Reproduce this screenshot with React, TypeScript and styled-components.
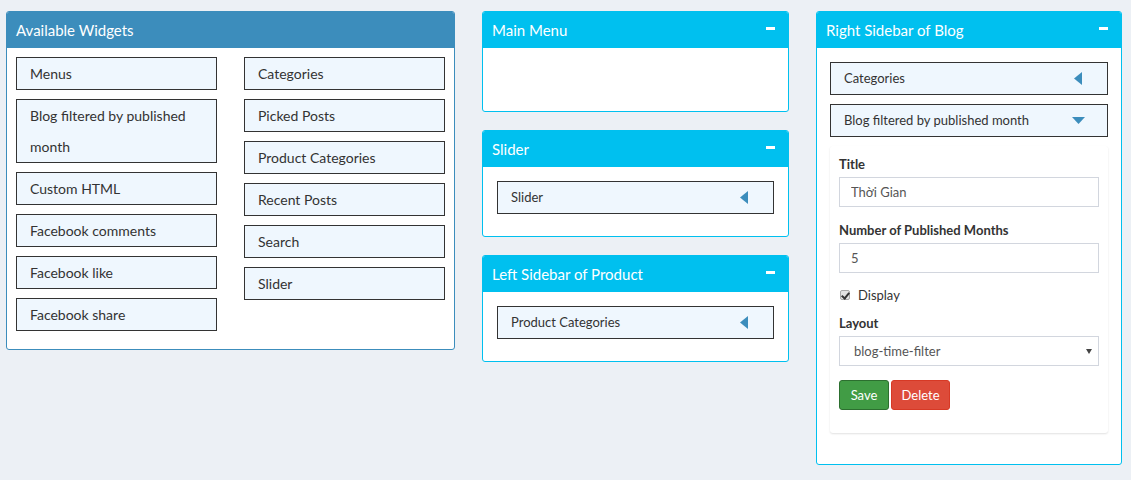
import React from "react";
import styled, { createGlobalStyle } from "styled-components";

const Global = createGlobalStyle`
  html, body { margin: 0; padding: 0; }
  body {
    background: #ecf0f5;
    font-family: Lato, "Noto Sans", "Liberation Sans", sans-serif;
    color: #333;
  }
`;

const Page = styled.div`
  display: grid;
  grid-template-columns: 449px 307px 306px;
  column-gap: 27px;
  padding: 11px 6px;
  align-items: start;
`;

const Column = styled.div`
  display: flex;
  flex-direction: column;
  gap: 18px;
`;

const Panel = styled.section<{ $color: string }>`
  border: 1px solid ${(p) => p.$color};
  border-radius: 3px;
  background: #fff;
  overflow: hidden;
`;

const Header = styled.header<{ $color: string }>`
  height: 36px;
  background: ${(p) => p.$color};
  display: flex;
  align-items: center;
  justify-content: space-between;
  padding: 0 13px 0 9px;
`;

const Title = styled.h3`
  margin: 0 0 1px;
  font-size: 15px;
  font-weight: 400;
  color: #fff;
`;

const Minus = styled.span`
  width: 9px;
  height: 3px;
  background: #fff;
  margin-top: -4px;
`;

const Body = styled.div<{ $pad: string; $minH?: number }>`
  padding: ${(p) => p.$pad};
  min-height: ${(p) => (p.$minH ? `${p.$minH}px` : "0")};
  display: flex;
  flex-direction: column;
  gap: 9px;
`;

const TwoCols = styled.div`
  display: grid;
  grid-template-columns: 1fr 1fr;
  column-gap: 27px;
  padding: 9px 9px 18px;
  align-items: start;
`;

const Stack = styled.div`
  display: flex;
  flex-direction: column;
  gap: 9px;
`;

const Item = styled.div<{ $size: number }>`
  border: 1px solid #333;
  background: #eff7fe;
  min-height: 31px;
  line-height: 31px;
  font-size: ${(p) => p.$size}px;
  padding: 0 11px 0 13px;
  color: #333;
  display: flex;
  align-items: flex-start;
  justify-content: space-between;
`;

const ItemText = styled.span<{ $maxW?: number }>`
  max-width: ${(p) => (p.$maxW ? `${p.$maxW}px` : "none")};
`;

const CaretBox = styled.span`
  width: 14px;
  height: 31px;
  margin-right: 11px;
  display: flex;
  align-items: center;
  justify-content: center;
`;

const FormBox = styled.div`
  background: #fff;
  border-radius: 3px;
  box-shadow: 0 1px 2px rgba(0, 0, 0, 0.12);
  padding: 9px 9px 23px;
  display: flex;
  flex-direction: column;
`;

const Label = styled.label<{ $mt?: number }>`
  display: block;
  font-weight: 700;
  font-size: 13px;
  line-height: 18px;
  color: #333;
  margin-top: ${(p) => p.$mt ?? 0}px;
  margin-bottom: 4px;
`;

const Input = styled.input`
  box-sizing: border-box;
  height: 30px;
  width: 100%;
  border: 1px solid #d2d6de;
  padding: 0 11px;
  font-family: inherit;
  font-size: 13px;
  color: #555;
  outline: none;
`;

const CheckRow = styled.label`
  display: flex;
  align-items: center;
  height: 20px;
  margin-top: 12px;
  font-size: 13px;
  color: #333;
  gap: 8px;
`;

const Check = styled.input`
  appearance: none;
  margin: 0 0 0 1px;
  width: 10px;
  height: 10px;
  border: 1px solid #a9a9a9;
  border-radius: 2px;
  background: #e3e3e3;
  position: relative;
  &::after {
    content: "";
    position: absolute;
    left: 2px;
    top: 0px;
    width: 3px;
    height: 6px;
    border: solid #333;
    border-width: 0 2px 2px 0;
    transform: rotate(40deg);
  }
`;

const SelectWrap = styled.div`
  position: relative;
  &::after {
    content: "";
    position: absolute;
    right: 7px;
    top: 13px;
    border-left: 3px solid transparent;
    border-right: 3px solid transparent;
    border-top: 5px solid #444;
  }
`;

const Select = styled.select`
  appearance: none;
  box-sizing: border-box;
  width: 100%;
  height: 30px;
  border: 1px solid #d2d6de;
  background: #fff;
  padding: 0 14px;
  font-family: inherit;
  font-size: 13px;
  color: #555;
  outline: none;
`;

const Buttons = styled.div`
  display: flex;
  gap: 2px;
  margin-top: 14px;
`;

const Button = styled.button<{ $bg: string; $border: string; $w: number }>`
  height: 30px;
  width: ${(p) => p.$w}px;
  background: ${(p) => p.$bg};
  border: 1px solid ${(p) => p.$border};
  border-radius: 3px;
  color: #fff;
  font-family: inherit;
  font-size: 13px;
  padding: 0;
`;

const LeftCaret = () => (
  <svg width="8" height="13" viewBox="0 0 8 13">
    <polygon points="8,0 8,13 0,6.5" fill="#3c8dbc" />
  </svg>
);

const DownCaret = () => (
  <svg width="13" height="7" viewBox="0 0 13 7">
    <polygon points="0,0 13,0 6.5,7" fill="#3c8dbc" />
  </svg>
);

const BLUE = "#3c8dbc";
const CYAN = "#00c0ef";

const leftItems = [
  "Menus",
  "Blog filtered by published month",
  "Custom HTML",
  "Facebook comments",
  "Facebook like",
  "Facebook share",
];
const rightItems = ["Categories", "Picked Posts", "Product Categories", "Recent Posts", "Search", "Slider"];

export default function App() {
  return (
    <>
      <Global />
      <Page>
        <Panel $color={BLUE}>
          <Header $color={BLUE}>
            <Title>Available Widgets</Title>
          </Header>
          <TwoCols>
            <Stack>
              {leftItems.map((t) => (
                <Item key={t} $size={14}>
                  <ItemText $maxW={t.startsWith("Blog") ? 160 : undefined}>{t}</ItemText>
                </Item>
              ))}
            </Stack>
            <Stack>
              {rightItems.map((t) => (
                <Item key={t} $size={14}>
                  <ItemText>{t}</ItemText>
                </Item>
              ))}
            </Stack>
          </TwoCols>
        </Panel>

        <Column>
          <Panel $color={CYAN}>
            <Header $color={CYAN}>
              <Title>Main Menu</Title>
              <Minus />
            </Header>
            <Body $pad="0" $minH={63} />
          </Panel>
          <Panel $color={CYAN}>
            <Header $color={CYAN}>
              <Title>Slider</Title>
              <Minus />
            </Header>
            <Body $pad="14px 14px 22px">
              <Item $size={13}>
                <ItemText>Slider</ItemText>
                <CaretBox>
                  <LeftCaret />
                </CaretBox>
              </Item>
            </Body>
          </Panel>
          <Panel $color={CYAN}>
            <Header $color={CYAN}>
              <Title>Left Sidebar of Product</Title>
              <Minus />
            </Header>
            <Body $pad="14px 14px 22px">
              <Item $size={13}>
                <ItemText>Product Categories</ItemText>
                <CaretBox>
                  <LeftCaret />
                </CaretBox>
              </Item>
            </Body>
          </Panel>
        </Column>

        <Panel $color={CYAN}>
          <Header $color={CYAN}>
            <Title>Right Sidebar of Blog</Title>
            <Minus />
          </Header>
          <Body $pad="14px 13px 31px">
            <Item $size={13}>
              <ItemText>Categories</ItemText>
              <CaretBox>
                <LeftCaret />
              </CaretBox>
            </Item>
            <Item $size={13}>
              <ItemText>Blog filtered by published month</ItemText>
              <CaretBox>
                <DownCaret />
              </CaretBox>
            </Item>
            <FormBox>
              <Label>Title</Label>
              <Input defaultValue="Thời Gian" />
              <Label $mt={14}>Number of Published Months</Label>
              <Input defaultValue="5" />
              <CheckRow>
                <Check type="checkbox" defaultChecked />
                Display
              </CheckRow>
              <Label $mt={9}>Layout</Label>
              <SelectWrap>
                <Select defaultValue="blog-time-filter">
                  <option value="blog-time-filter">blog-time-filter</option>
                </Select>
              </SelectWrap>
              <Buttons>
                <Button $bg="#419c45" $border="#2c6f2f" $w={50}>
                  Save
                </Button>
                <Button $bg="#dd4b39" $border="#d73925" $w={59}>
                  Delete
                </Button>
              </Buttons>
            </FormBox>
          </Body>
        </Panel>
      </Page>
    </>
  );
}
